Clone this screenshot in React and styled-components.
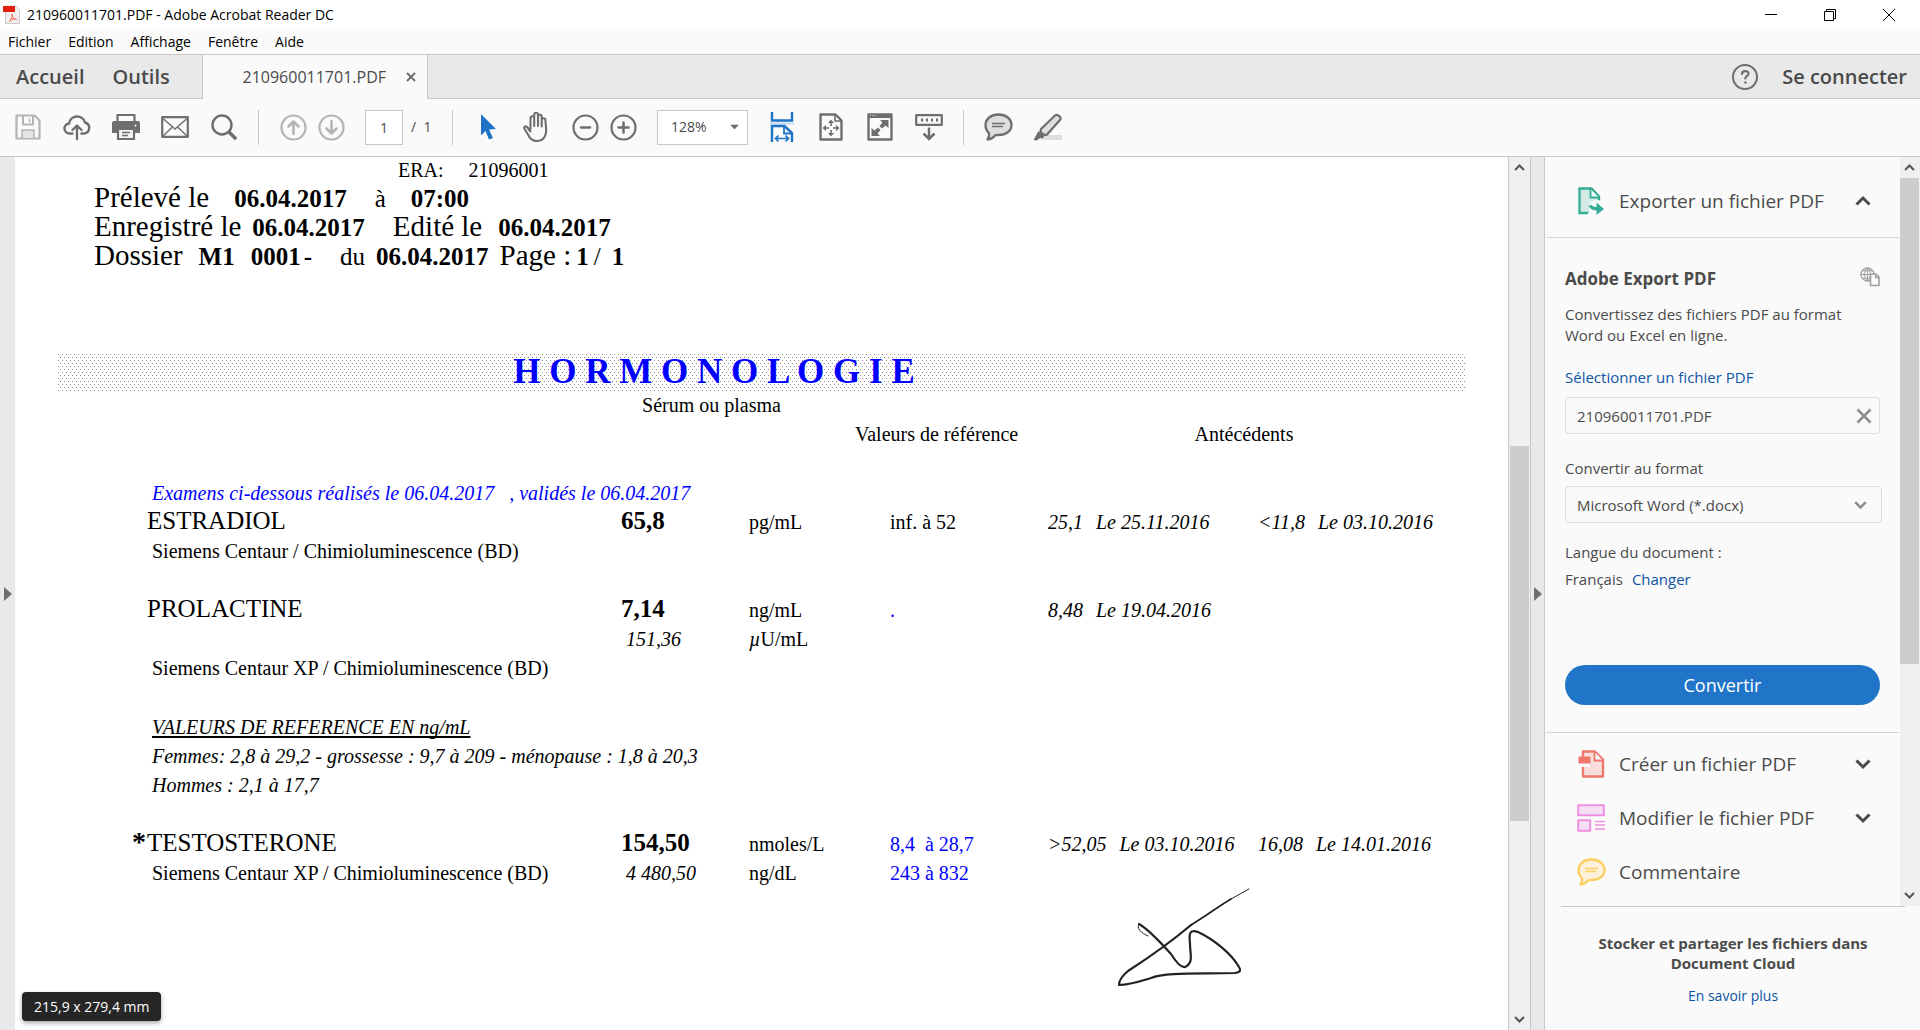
import React from "react";
import styled, { createGlobalStyle, css } from "styled-components";

const line = "#c8c8c8";
const ink = "#4b4b4b";
const grey = "#6e6e6e";
const link = "#0d55a5";

const GlobalStyle = createGlobalStyle`
  *, *::before, *::after { box-sizing: border-box; }
  html, body, #root { height: 100%; }
  body {
    margin: 0;
    overflow: hidden;
    background: #fafafa;
    color: ${ink};
    font: 14px/20px "Open Sans", "Noto Sans", sans-serif;
  }
  button, input, select { font: inherit; color: inherit; }
  a { color: ${link}; text-decoration: none; }
  svg { display: block; }
`;

const Window = styled.div`
  display: flex;
  flex-direction: column;
  height: 100%;
`;

const TitleBar = styled.header`
  display: flex;
  align-items: center;
  height: 29px;
  flex: none;
  padding: 0 2px;
  gap: 6px;
  background: #fff;
  color: #000;
`;

const WindowTitle = styled.h1`
  flex: 1;
  margin: 0;
  font-size: 14px;
  font-weight: 400;
`;

const PlainButton = styled.button`
  display: inline-flex;
  align-items: center;
  justify-content: center;
  padding: 0;
  border: 0;
  background: none;
`;

const WindowButtons = styled.div`
  display: flex;
`;

const WindowButton = styled(PlainButton)`
  width: 59px;
  height: 28px;
`;

const MenuBar = styled.nav`
  display: flex;
  align-items: center;
  gap: 17px;
  height: 25px;
  flex: none;
  padding: 0 8px;
`;

const MenuItem = styled(PlainButton)`
  color: #000;
`;

const TabBar = styled.div`
  display: flex;
  height: 45px;
  flex: none;
  background: #e9e9e9;
  border-top: 1px solid ${line};
`;

const HomeTabs = styled.div`
  display: flex;
  align-items: center;
  gap: 28px;
  width: 203px;
  padding-left: 16px;
  border-right: 1px solid ${line};
  border-bottom: 1px solid ${line};
`;

const BarButton = styled(PlainButton)`
  font-size: 20px;
  font-weight: 600;
`;

const DocumentTab = styled.div`
  display: flex;
  align-items: center;
  justify-content: flex-end;
  gap: 20px;
  width: 225px;
  padding-right: 11px;
  background: #fafafa;
  border-right: 1px solid ${line};
  font-size: 16px;
`;

const Account = styled.div`
  flex: 1;
  display: flex;
  align-items: center;
  justify-content: flex-end;
  gap: 23px;
  padding-right: 13px;
  border-bottom: 1px solid ${line};
`;

const Toolbar = styled.div`
  display: flex;
  align-items: center;
  gap: 19px;
  height: 58px;
  flex: none;
  padding: 0 13px 1px;
  border-bottom: 1px solid ${line};
  color: ${grey};
`;

const ToolPair = styled.div`
  display: flex;
  align-items: center;
  gap: 8px;
`;

const ToolButton = styled(PlainButton)`
  width: 30px;
  height: 36px;
  color: ${(p) => (p.$muted ? "#b4b4b4" : p.$active ? "#1f73c7" : grey)};
`;

const Separator = styled.span`
  width: 1px;
  height: 35px;
  background: ${line};
`;

const PageInput = styled.input`
  width: 38px;
  height: 35px;
  padding: 0;
  border: 1px solid ${line};
  background: #fff;
  color: ${ink};
  text-align: center;
`;

const PageCount = styled.span`
  width: 22px;
  color: ${ink};
  white-space: pre;
`;

const SelectBox = styled.span`
  position: relative;
  display: ${(p) => (p.$block ? "block" : "inline-block")};

  svg {
    position: absolute;
    top: 50%;
    right: ${(p) => (p.$block ? 15 : 9)}px;
    transform: translateY(-50%);
    pointer-events: none;
  }
`;

const fieldFrame = css`
  width: 100%;
  height: 37px;
  padding: 0 11px;
  border: 1px solid #dcdcdc;
  border-radius: 4px;
  background: #fafafa;
`;

const ZoomSelect = styled.select`
  appearance: none;
  width: 91px;
  height: 35px;
  padding: 0 13px;
  border: 1px solid ${line};
  border-radius: 0;
  background: #fff;
  color: ${ink};
`;

const Workspace = styled.main`
  display: flex;
  flex: 1;
  min-height: 0;
`;

const Rail = styled(PlainButton)`
  flex: none;
  width: 15px;
  background: #e9e9e9;
  color: ${grey};
  ${(p) => p.$framed && css`
    border: solid ${line};
    border-width: 0 1px;
  `}
`;

const Viewer = styled.section`
  position: relative;
  flex: 1;
  min-width: 0;
  overflow: hidden;
  background: #fff;
  color: #000;
  font: 20px/29px "Liberation Serif", "Times New Roman", serif;
`;

const Sheet = styled.article`
  display: flex;
  flex-direction: column;
  padding: 0 42px 0 43px;
`;

const EraLine = styled.p`
  margin: 0;
  padding-left: 340px;
  line-height: 26px;
  white-space: pre;
`;

const FileLine = styled.p`
  display: flex;
  align-items: baseline;
  height: 29px;
  margin: 0;
  padding-left: 36px;
  font-size: 25px;
  white-space: pre;
`;

const Piece = styled.span`
  margin-left: ${(p) => p.$gap || 0}px;
  font-size: ${(p) => (p.$label ? 29 : 25)}px;
  font-weight: ${(p) => (p.$bold ? 700 : 400)};
`;

const Band = styled.h2`
  height: 37px;
  margin: 84px 0 0;
  padding-right: 96px;
  background-image:
    radial-gradient(circle at 0 0, #8c8c8c 1px, transparent 1px),
    radial-gradient(circle at 0 0, #8c8c8c 1px, transparent 1px);
  background-size: 4px 6px;
  background-position: 0 0, 2px 3px;
  color: #00f;
  font-size: 35px;
  line-height: 36px;
  text-align: center;
`;

const Sample = styled.p`
  margin: 0;
  padding-right: 101px;
  text-align: center;
`;

const Results = styled.table`
  table-layout: fixed;
  width: calc(100% - 100px);
  margin: 0 26px 0 74px;
  border-collapse: collapse;

  th, td {
    height: 29px;
    padding: 0;
    font-weight: 400;
    text-align: left;
    vertical-align: baseline;
    white-space: nowrap;
  }

  tbody tr:first-child > * { padding-top: 30px; }
`;

const Col = styled.col`
  width: ${(p) => (p.$width ? `${p.$width}px` : "auto")};
`;

const CenteredHead = styled.th`
  && { text-align: center; }
`;

const TestName = styled.th`
  && { padding-left: 15px; }
  span { font-size: 25px; line-height: 25px; }
`;

const Flag = styled.b`
  display: inline-block;
  width: 15px;
  margin-left: -15px;
  font: 700 28px/20px "Liberation Serif", serif;
`;

const NoteCell = styled.td`
  && { padding-left: 20px; }
  font-style: ${(p) => (p.$italic ? "italic" : "normal")};
  color: ${(p) => (p.$blue ? "#00f" : "inherit")};

  u { text-decoration-thickness: 2px; text-underline-offset: 2px; text-decoration-skip-ink: none; }
`;

const Value = styled.td`
  b { font-size: 25px; line-height: 25px; }
  i { margin-left: 5px; }
`;

const Reference = styled.td`
  && { padding-left: 35px; }
  color: ${(p) => (p.$blue ? "#00f" : "inherit")};
`;

const Prior = styled.i`
  span { margin-left: 13px; }
`;

const Signature = styled.svg`
  align-self: flex-end;
  margin-right: 215px;
`;

const PageSize = styled.div`
  position: absolute;
  left: 7px;
  bottom: 9px;
  padding: 0 12px;
  border-radius: 4px;
  background: #262626;
  box-shadow: 0 2px 4px rgba(0, 0, 0, 0.35);
  color: #fff;
  font: 14px/29px "Open Sans", "Noto Sans", sans-serif;
`;

const ScrollTrack = styled.div`
  display: flex;
  flex-direction: column;
  flex: none;
  width: ${(p) => (p.$framed ? 22 : 20)}px;
  background: #f0f0f0;
  border-left: ${(p) => (p.$framed ? `1px solid ${line}` : "0")};
  padding: 0 1px 0 ${(p) => (p.$framed ? 1 : 0)}px;
  color: #555;
`;

const ScrollButton = styled(PlainButton)`
  height: 21px;
  flex: none;
`;

const ScrollLane = styled.div`
  flex: 1;
  display: flex;
  flex-direction: column;
`;

const LanePart = styled.div`
  flex: ${(p) => p.$share} 0 0;
  background: ${(p) => (p.$thumb ? "#cdcdcd" : "transparent")};
`;

const Panel = styled.aside`
  display: flex;
  flex-direction: column;
  flex: none;
  width: 375px;
  font-size: 15px;
`;

const PanelTop = styled.div`
  display: flex;
  flex: 1;
  min-height: 0;
`;

const PanelBody = styled.div`
  flex: 1;
  min-width: 0;
  padding: 0 1px;
  overflow: hidden;
`;

const ToolHead = styled.button`
  display: flex;
  align-items: center;
  gap: 14px;
  width: 100%;
  height: ${(p) => (p.$tall ? 81 : 54)}px;
  padding: ${(p) => (p.$tall ? "8px" : "0")} 28px 0 31px;
  border: 0;
  border-bottom: ${(p) => (p.$tall ? "1px solid #d5d5d5" : "0")};
  background: none;
  color: ${ink};
  font-size: 19px;
  text-align: left;

  span { flex: 1; }
`;

const CommentTint = styled.i`
  width: 28px;
  color: #fdcf62;
`;

const ToolList = styled.div`
  padding-top: 4px;
  border-top: 1px solid #d5d5d5;
`;

const ExportForm = styled.form`
  display: flex;
  flex-direction: column;
  padding: 29px 17px 27px 19px;
`;

const ExportTitle = styled.div`
  display: flex;
  justify-content: space-between;
  height: 37px;
  padding-right: 2px;

  h2 { margin: 0; font-size: 17px; line-height: 24px; }
`;

const Intro = styled.p`
  margin: 0 0 21px;
  line-height: 21px;
`;

const FieldLabel = styled.label`
  margin: 24px 0 8px;
`;

const FileField = styled.div`
  display: flex;
  margin-top: 10px;
  padding-right: 2px;
`;

const FileInput = styled.input`
  ${fieldFrame}
  flex: 1;
  min-width: 0;
  border-right: 0;
  border-radius: 4px 0 0 4px;
`;

const ClearButton = styled(PlainButton)`
  width: 32px;
  height: 37px;
  border: 1px solid #dcdcdc;
  border-left: 0;
  border-radius: 0 4px 4px 0;
`;

const FormatSelect = styled.select`
  ${fieldFrame}
  appearance: none;
`;

const Language = styled.p`
  margin: 16px 0 72px;
  line-height: 27px;

  a { margin-left: 9px; }
`;

const ConvertButton = styled.button`
  height: 40px;
  margin-right: 2px;
  border: 0;
  border-radius: 20px;
  background: #2075c9;
  color: #fff;
  font-size: 18px;
  line-height: 24px;
`;

const Promo = styled.footer`
  margin: 0 15px 0 16px;
  padding: 26px 30px 24px;
  border-top: 1px solid ${line};
  text-align: center;

  p { margin: 0 0 12px; font-weight: 700; }
  a { font-size: 14px; }
`;

const stroke = { fill: "none", stroke: "currentColor", strokeWidth: 2, strokeLinecap: "round", strokeLinejoin: "round" };

const AppIcon = () => (
  <svg width="19" height="20" viewBox="0 0 19 20">
    <path d="M3.500 1h10l4 4v13.500h-14z" fill="#f1eeee" stroke="#d0cccc" />
    <path d="M1 1h12v6H1z" fill="#e2200b" />
    <path d="M10 9c1 3-1 5-2.500 8M10 9c0 3 2 5 5 5.500M8 15c2-1 4-1 6-1" fill="none" stroke="#ee6a5c" />
  </svg>
);

const SaveIcon = () => (
  <svg width="26" height="26" viewBox="0 0 26 26" {...stroke}>
    <path d="M1.500 1.500h18l5 5v18h-23z" strokeWidth="2.200" />
    <path d="M8 2v8.500h10V2" /><path d="M14.500 5v2.500" strokeWidth="1.500" />
    <path d="M7 24v-8h12v8" fill="#e4e4e4" strokeWidth="1.500" />
  </svg>
);
const CloudIcon = () => (
  <svg width="28" height="28" viewBox="0 0 28 28" {...stroke} strokeWidth="2.400">
    <path d="M9.500 20.500H7a5 5 0 0 1-1-10 8.200 8.200 0 0 1 16-1 5.600 5.600 0 0 1-1 11h-2.500" />
    <path d="M14 26V13M9.500 17l4.500-4.500 4.500 4.500" />
  </svg>
);
const PrintIcon = () => (
  <svg width="28" height="28" viewBox="0 0 28 28">
    <path d="M5.500 9V2h17v7" fill="none" stroke="currentColor" strokeWidth="2.200" strokeLinejoin="round" />
    <path d="M2 8h24q2 0 2 2v10h-5v-4H5v4H0V10q0-2 2-2z" fill="currentColor" />
    <circle cx="23.500" cy="12.500" r="1" fill="#fff" />
    <path d="M6 16h16v10H6z" fill="#f2f2f2" stroke="currentColor" strokeWidth="2.200" />
    <path d="M10 19.500h8M10 22.500h6" stroke="currentColor" strokeWidth="1.300" />
  </svg>
);
const MailIcon = () => (
  <svg width="28" height="22" viewBox="0 0 28 22" fill="none" stroke="currentColor">
    <path d="M1.200 1.200h25.600v19.600H1.200z" strokeWidth="2.200" strokeLinejoin="round" />
    <path d="M2 2.500l12 10.500 12-10.500M2 20l9.500-9M26 20l-9.500-9" strokeWidth="1.400" />
  </svg>
);
const SearchIcon = () => (
  <svg width="26" height="26" viewBox="0 0 26 26" {...stroke}>
    <circle cx="11" cy="11" r="9.500" strokeWidth="2.400" />
    <path d="M18.500 18.500l5.500 5.500" strokeWidth="3.600" />
  </svg>
);
const CircleIcon = ({ d }) => (
  <svg width="27" height="27" viewBox="0 0 27 27" {...stroke} strokeWidth="2.200">
    <circle cx="13.500" cy="13.500" r="12" />
    <path d={d} strokeWidth="2.500" />
  </svg>
);
const PointerIcon = () => (
  <svg width="18" height="28" viewBox="0 0 18 28">
    <path d="M3 1l15 15-7 .5 4 8.500-4 1.500-3.500-8.500L3 22.500z" fill="currentColor" />
  </svg>
);
const HandIcon = () => (
  <svg width="30" height="32" viewBox="0 0 30 32" {...stroke} strokeWidth="2.100">
    <path d="M9.500 18V7.500c0-3 3.700-3 3.700 0V15M13.200 8V4c0-3 3.800-3 3.800 0v11M17 6c0-3 3.700-3 3.700 0v9.500M20.700 9.500c0-3 3.800-3 3.800 0 0 4 1.200 9 .3 13-.8 4-3.300 7.500-8.800 7.500-5 0-7.500-3-9-6.500L3.500 18c-1-2.500 1.500-3.500 3-1.500l3 4" />
  </svg>
);
const FitWidthIcon = () => (
  <svg width="24" height="32" viewBox="0 0 24 32" fill="none" stroke="currentColor" strokeWidth="2.400">
    <path d="M2 1v8.500h20V1" /><path d="M0 12.500h24" stroke="#c9dcf0" />
    <path d="M2 31V15h12.500L22 22v9" /><path d="M14 15v7.500h8" strokeWidth="1.800" />
    <path d="M5.500 27.500h13M8.500 24.500l-3 3 3 3M15.500 24.500l3 3-3 3" strokeWidth="1.700" />
  </svg>
);
const FitPageIcon = () => (
  <svg width="24" height="28" viewBox="0 0 24 28" fill="none" stroke="currentColor" strokeWidth="2.400" strokeLinejoin="round">
    <path d="M1.500 1.500h15l6 6v19h-21z" /><path d="M16 2v6h6" strokeWidth="1.600" />
    <path d="M12 9v4M12 17v4M6 15h4M14 15h4" strokeWidth="1.600" />
    <path d="M12 6.500l3 3.500H9zM12 23.500l3-3.500H9zM3.500 15l3.500-3v6zM20.500 15L17 12v6z" fill="currentColor" stroke="none" />
  </svg>
);
const FullScreenIcon = () => (
  <svg width="26" height="28" viewBox="0 0 26 28">
    <path d="M1.500 1.500h23v25h-23z" fill="none" stroke="currentColor" strokeWidth="2.400" strokeLinejoin="round" />
    <path d="M1 1h24v4H1zM21.500 7v8l-3-2.500-3.500 3-2.500-2.500 3-3.500-2.500-2.500zM4.500 23v-8l3 2.500 3.500-3 2.500 2.500-3 3.500 2.500 2.500z" fill="currentColor" />
    <path d="M3 2.500h6" stroke="#ddd" strokeDasharray="1 1.500" />
  </svg>
);
const ScrollModeIcon = () => (
  <svg width="28" height="28" viewBox="0 0 28 28" fill="none" stroke="currentColor" strokeWidth="2.200">
    <path d="M1.200 2.200h25.600v9.600H1.200z" strokeLinejoin="round" />
    <path d="M6 7h17" strokeWidth="3" strokeDasharray="2 3" />
    <path d="M14 14.500V26M8.500 20.500L14 26l5.500-5.500" strokeWidth="2.500" />
  </svg>
);
const CommentIcon = ({ fill = "#dedede" }) => (
  <svg width="29" height="28" viewBox="0 0 29 28" stroke="currentColor" strokeLinejoin="round">
    <path d="M14.500 1.500C22 1.500 27.500 6 27.500 12S22 22 14.500 22c-1.500 0-2 .1-3 0-2.500 3-5 4.500-8 4.500 1.500-2 2-4 1.500-6.500-2.300-2-3.500-4.500-3.500-8 0-6 5.500-10.500 13-10.500z" fill={fill} strokeWidth="2.300" />
    <path d="M8 10.500h13M8 13.500h11" strokeWidth="1.400" />
  </svg>
);
const PenIcon = () => (
  <svg width="29" height="28" viewBox="0 0 29 28">
    <path d="M7 27l5-5h17v5z" fill="#dedede" />
    <path d="M8 16L22 2.500c2.500-2 7 2 5 4.500L14 21.500c-3 1.500-7.500-2-6-5.500z" fill="#dedede" stroke="currentColor" strokeWidth="2.200" />
    <path d="M5.500 18l6 5-2 2.500-2.500-.5-3 2.500-3.500-.5z" fill="currentColor" />
  </svg>
);
const HelpIcon = () => (
  <svg width="28" height="28" viewBox="0 0 28 28" {...stroke} stroke={grey}>
    <circle cx="14" cy="14" r="12" />
    <path d="M11 11c0-4 6.500-3.800 6.500-.3 0 2.300-3.200 2.300-3.200 4.800" strokeWidth="2.200" />
    <circle cx="14.300" cy="19.500" r=".8" fill={grey} strokeWidth="1" />
  </svg>
);
const Chevron = ({ up, size = 16, width = 3 }) => (
  <svg width={size} height={size} viewBox="0 0 16 16" fill="none" stroke="currentColor" strokeWidth={width}>
    <path d={up ? "M1.500 11.500L8 5l6.500 6.500" : "M1.500 4.500L8 11l6.500-6.500"} />
  </svg>
);
const Triangle = () => (
  <svg width="8" height="14" viewBox="0 0 8 14"><path d="M0 0l8 7-8 7z" fill="currentColor" /></svg>
);
const ExportIcon = () => (
  <svg width="28" height="28" viewBox="0 0 28 28">
    <path d="M2.500 1.500h12l8 8V26h-20z" fill="#d3ebe6" />
    <path d="M11 26H2.500V1.500h12l7.500 8V14" fill="none" stroke="#33ad95" strokeWidth="2.300" />
    <path d="M13.500 2v8.500H22" fill="#fafafa" stroke="#33ad95" strokeWidth="1.800" />
    <circle cx="20" cy="21" r="8" fill="#fafafa" />
    <path d="M13 18.500c1.500 3 4 3.300 8 3.300" fill="none" stroke="#33ad95" strokeWidth="3.200" />
    <path d="M19.500 15.500L27 22l-7.500 6z" fill="#33ad95" />
  </svg>
);
const CreateIcon = () => (
  <svg width="28" height="28" viewBox="0 0 28 28">
    <path d="M6 1.500h12l8 8v17H6z" fill="#f8dfdd" stroke="#f0776c" strokeWidth="2.300" strokeLinejoin="round" />
    <path d="M17.500 2v8.500H26" fill="#fafafa" stroke="#f0776c" strokeWidth="1.800" />
    <path d="M1 12h12v5H1z" fill="#fafafa" />
    <path d="M1.500 6.500h12v7h-12z" fill="#f0776c" />
  </svg>
);
const EditIcon = () => (
  <svg width="28" height="28" viewBox="0 0 28 28" fill="#f7e0f4" stroke="#ee8fdf" strokeWidth="2">
    <path d="M1.200 1.200h25.600v10H1.200zM1.200 16.200h12v10.600h-12z" strokeLinejoin="round" />
    <path d="M18 17.500h10M18 21h10M18 25h10" strokeWidth="1.300" />
  </svg>
);
const GlobeIcon = () => (
  <svg width="20" height="20" viewBox="0 0 20 20" fill="none" stroke="#a0a0a0" strokeWidth="1.300">
    <circle cx="7.500" cy="7.500" r="6.500" />
    <path d="M1 7.500h13M2.500 3.800h10M2.500 11.200h10M7.500 1v13M7.500 1C3.500 4 3.500 11 7.500 14M7.500 1c4 3 4 10 0 13" strokeWidth="1" />
    <path d="M10.500 7h5.500l3 3v8.500h-8.500z" fill="#fafafa" strokeWidth="1.600" /><path d="M15.500 7v3.500H19" />
  </svg>
);

const fileLines = [
  [
    { text: "Prélevé le", label: true },
    { text: "06.04.2017", bold: true, gap: 25 },
    { text: "à", gap: 28 },
    { text: "07:00", bold: true, gap: 25 },
  ],
  [
    { text: "Enregistré le", label: true },
    { text: "06.04.2017", bold: true, gap: 11 },
    { text: "Edité le", label: true, gap: 28 },
    { text: "06.04.2017", bold: true, gap: 16 },
  ],
  [
    { text: "Dossier", label: true },
    { text: "M1", bold: true, gap: 16 },
    { text: "0001", bold: true, gap: 16 },
    { text: "-", bold: true, gap: 3 },
    { text: "du", gap: 28 },
    { text: "06.04.2017", bold: true, gap: 11 },
    { text: "Page :", label: true, gap: 11 },
    { text: "1", bold: true, gap: 5 },
    { text: "/", gap: 5 },
    { text: "1", bold: true, gap: 11 },
  ],
];

function PriorResult({ value, date }) {
  return (
    <td>
      <Prior>{value}<span>Le {date}</span></Prior>
    </td>
  );
}

function Scrollbar({ framed, before, thumb, after }) {
  return (
    <ScrollTrack $framed={framed}>
      <ScrollButton aria-label="Défiler vers le haut"><Chevron up size={11} width={3} /></ScrollButton>
      <ScrollLane>
        <LanePart $share={before} />
        <LanePart $share={thumb} $thumb />
        <LanePart $share={after} />
      </ScrollLane>
      <ScrollButton aria-label="Défiler vers le bas"><Chevron size={11} width={3} /></ScrollButton>
    </ScrollTrack>
  );
}

function Report() {
  return (
    <Viewer>
      <Sheet>
        <EraLine>{"ERA:     21096001"}</EraLine>
        {fileLines.map((pieces, row) => (
          <FileLine key={row}>
            {pieces.map((p, i) => (
              <Piece key={i} $gap={p.gap} $label={p.label} $bold={p.bold}>{p.text}</Piece>
            ))}
          </FileLine>
        ))}
        <Band>H O R M O N O L O G I E</Band>
        <Sample>Sérum ou plasma</Sample>
        <Results>
          <colgroup>
            <Col /><Col $width={128} /><Col $width={106} /><Col $width={193} /><Col $width={210} /><Col $width={182} />
          </colgroup>
          <thead>
            <tr>
              <td colSpan={3} />
              <th scope="col">Valeurs de référence</th>
              <CenteredHead scope="colgroup" colSpan={2}>Antécédents</CenteredHead>
            </tr>
          </thead>
          <tbody>
            <tr>
              <NoteCell colSpan={6} $italic $blue>
                Examens ci-dessous réalisés le 06.04.2017 &nbsp;&nbsp;, validés le 06.04.2017
              </NoteCell>
            </tr>
            <tr>
              <TestName scope="row"><span>ESTRADIOL</span></TestName>
              <Value><b>65,8</b></Value>
              <td>pg/mL</td>
              <Reference>inf. à 52</Reference>
              <PriorResult value="25,1" date="25.11.2016" />
              <PriorResult value="<11,8" date="03.10.2016" />
            </tr>
            <tr><NoteCell colSpan={6}>Siemens Centaur / Chimioluminescence (BD)</NoteCell></tr>
          </tbody>
          <tbody>
            <tr>
              <TestName scope="row"><span>PROLACTINE</span></TestName>
              <Value><b>7,14</b></Value>
              <td>ng/mL</td>
              <Reference $blue>.</Reference>
              <PriorResult value="8,48" date="19.04.2016" />
              <td />
            </tr>
            <tr>
              <td />
              <Value><i>151,36</i></Value>
              <td colSpan={4}><i>µ</i>U/mL</td>
            </tr>
            <tr><NoteCell colSpan={6}>Siemens Centaur XP / Chimioluminescence (BD)</NoteCell></tr>
          </tbody>
          <tbody>
            <tr><NoteCell colSpan={6} $italic><u>VALEURS DE REFERENCE EN ng/mL</u></NoteCell></tr>
            <tr>
              <NoteCell colSpan={6} $italic>
                Femmes: 2,8 à 29,2 - grossesse : 9,7 à 209 - ménopause : 1,8 à 20,3
              </NoteCell>
            </tr>
            <tr><NoteCell colSpan={6} $italic>Hommes : 2,1 à 17,7</NoteCell></tr>
          </tbody>
          <tbody>
            <tr>
              <TestName scope="row"><Flag>*</Flag><span>TESTOSTERONE</span></TestName>
              <Value><b>154,50</b></Value>
              <td>nmoles/L</td>
              <Reference $blue>8,4 &nbsp;à 28,7</Reference>
              <PriorResult value=">52,05" date="03.10.2016" />
              <PriorResult value="16,08" date="14.01.2016" />
            </tr>
            <tr>
              <NoteCell>Siemens Centaur XP / Chimioluminescence (BD)</NoteCell>
              <Value><i>4 480,50</i></Value>
              <td>ng/dL</td>
              <Reference $blue>243 à 832</Reference>
              <td colSpan={2} />
            </tr>
          </tbody>
        </Results>
        <Signature width="134" height="100" viewBox="0 0 134 100" {...stroke} strokeWidth="2.200" stroke="#222">
          <path d="M74 37C54 54 28 72 11 83 5 88 2 93 2 97c10 0 22-4 32-7 14-6 50-4 84-5 6-1 6-3 4-6-8-14-26-28-41-35-9-3-9 2-8 12 0 10 4 19-5 23-4 1-9-5-14-13C45 56 31 41 22 36" />
          <path d="M74 37C92 26 102 18 114 11" strokeWidth="1.700" />
          <path d="M114 11L132 1M22 36c-3 4 2 9 9 12" strokeWidth="1" />
        </Signature>
      </Sheet>
      <PageSize>215,9 x 279,4 mm</PageSize>
    </Viewer>
  );
}

function ToolsPanel() {
  return (
    <Panel>
      <PanelTop>
        <PanelBody>
          <ToolHead $tall><ExportIcon /><span>Exporter un fichier PDF</span><Chevron up /></ToolHead>
          <ExportForm onSubmit={(e) => e.preventDefault()}>
            <ExportTitle><h2>Adobe Export PDF</h2><GlobeIcon /></ExportTitle>
            <Intro>Convertissez des fichiers PDF au format<br />Word ou Excel en ligne.</Intro>
            <a href="#fichier">Sélectionner un fichier PDF</a>
            <FileField>
              <FileInput id="fichier" aria-label="Fichier PDF" readOnly value="210960011701.PDF" />
              <ClearButton type="button" aria-label="Retirer le fichier">
                <svg width="16" height="16" viewBox="0 0 16 16" stroke="#8e8e8e" strokeWidth="2.500"><path d="M1.500 1.500l13 13M14.500 1.500l-13 13" /></svg>
              </ClearButton>
            </FileField>
            <FieldLabel htmlFor="format">Convertir au format</FieldLabel>
            <SelectBox $block>
              <FormatSelect id="format"><option>Microsoft Word (*.docx)</option></FormatSelect>
              <svg width="13" height="13" viewBox="0 0 16 16" fill="none" stroke="#8e8e8e" strokeWidth="3"><path d="M1.500 4.500L8 11l6.500-6.500" /></svg>
            </SelectBox>
            <Language>Langue du document :<br />Français<a href="#langue">Changer</a></Language>
            <ConvertButton type="submit">Convertir</ConvertButton>
          </ExportForm>
          <ToolList>
            <ToolHead><CreateIcon /><span>Créer un fichier PDF</span><Chevron /></ToolHead>
            <ToolHead><EditIcon /><span>Modifier le fichier PDF</span><Chevron /></ToolHead>
            <ToolHead>
              <CommentTint><CommentIcon fill="#fdf1dc" /></CommentTint><span>Commentaire</span>
            </ToolHead>
          </ToolList>
        </PanelBody>
        <Scrollbar before={0} thumb={487} after={221} />
      </PanelTop>
      <Promo>
        <p>Stocker et partager les fichiers dans Document Cloud</p>
        <a href="#cloud">En savoir plus</a>
      </Promo>
    </Panel>
  );
}

export default function App() {
  return (
    <Window>
      <GlobalStyle />
      <TitleBar>
        <AppIcon />
        <WindowTitle>210960011701.PDF - Adobe Acrobat Reader DC</WindowTitle>
        <WindowButtons>
          <WindowButton aria-label="Réduire">
            <svg width="12" height="12" stroke="#000"><path d="M0 5.500h12" /></svg>
          </WindowButton>
          <WindowButton aria-label="Restaurer">
            <svg width="12" height="12" stroke="#000" fill="none"><path d="M.5 2.500h9v9h-9zM2.500 2.500v-2h9v9h-2" /></svg>
          </WindowButton>
          <WindowButton aria-label="Fermer">
            <svg width="12" height="12" stroke="#000"><path d="M0 0l12 12M12 0L0 12" /></svg>
          </WindowButton>
        </WindowButtons>
      </TitleBar>
      <MenuBar>
        {["Fichier", "Edition", "Affichage", "Fenêtre", "Aide"].map((m) => <MenuItem key={m}>{m}</MenuItem>)}
      </MenuBar>
      <TabBar>
        <HomeTabs><BarButton>Accueil</BarButton><BarButton>Outils</BarButton></HomeTabs>
        <DocumentTab>
          210960011701.PDF
          <PlainButton aria-label="Fermer l’onglet">
            <svg width="10" height="10" viewBox="0 0 10 10" stroke={grey} strokeWidth="2"><path d="M1 1l8 8M9 1L1 9" /></svg>
          </PlainButton>
        </DocumentTab>
        <Account>
          <PlainButton aria-label="Aide en ligne"><HelpIcon /></PlainButton>
          <BarButton>Se connecter</BarButton>
        </Account>
      </TabBar>
      <Toolbar>
        <ToolButton $muted aria-label="Enregistrer"><SaveIcon /></ToolButton>
        <ToolButton aria-label="Envoyer vers le cloud"><CloudIcon /></ToolButton>
        <ToolButton aria-label="Imprimer"><PrintIcon /></ToolButton>
        <ToolButton aria-label="Courrier"><MailIcon /></ToolButton>
        <ToolButton aria-label="Rechercher"><SearchIcon /></ToolButton>
        <Separator />
        <ToolPair>
          <ToolButton $muted aria-label="Page précédente"><CircleIcon d="M13.500 20V8M8.500 12.500l5-5 5 5" /></ToolButton>
          <ToolButton $muted aria-label="Page suivante"><CircleIcon d="M13.500 7v12M8.500 14.500l5 5 5-5" /></ToolButton>
        </ToolPair>
        <ToolPair>
          <PageInput aria-label="Page" defaultValue="1" />
          <PageCount>{"/  1"}</PageCount>
        </ToolPair>
        <Separator />
        <ToolButton $active aria-label="Sélection"><PointerIcon /></ToolButton>
        <ToolButton aria-label="Main"><HandIcon /></ToolButton>
        <ToolPair>
          <ToolButton aria-label="Zoom arrière"><CircleIcon d="M9 13.500h9" /></ToolButton>
          <ToolButton aria-label="Zoom avant"><CircleIcon d="M8.500 13.500h10M13.500 8.500v10" /></ToolButton>
        </ToolPair>
        <SelectBox>
          <ZoomSelect aria-label="Zoom"><option>128%</option></ZoomSelect>
          <svg width="9" height="5" viewBox="0 0 9 5"><path d="M0 0h9L4.500 5z" fill={grey} /></svg>
        </SelectBox>
        <ToolButton $active aria-label="Ajuster à la largeur"><FitWidthIcon /></ToolButton>
        <ToolButton aria-label="Ajuster à la page"><FitPageIcon /></ToolButton>
        <ToolButton aria-label="Plein écran"><FullScreenIcon /></ToolButton>
        <ToolButton aria-label="Défilement"><ScrollModeIcon /></ToolButton>
        <Separator />
        <ToolButton aria-label="Ajouter une note"><CommentIcon /></ToolButton>
        <ToolButton aria-label="Surligner"><PenIcon /></ToolButton>
      </Toolbar>
      <Workspace>
        <Rail aria-label="Afficher le volet gauche"><Triangle /></Rail>
        <Report />
        <Scrollbar framed before={268} thumb={375} after={188} />
        <Rail $framed aria-label="Masquer le volet droit"><Triangle /></Rail>
        <ToolsPanel />
      </Workspace>
    </Window>
  );
}
